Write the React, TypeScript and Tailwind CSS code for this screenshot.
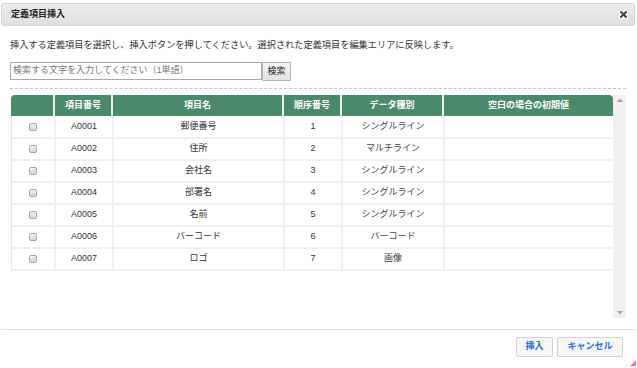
import React from "react";

const rows = [
  ["A0001", "郵便番号", "1", "シングルライン"],
  ["A0002", "住所", "2", "マルチライン"],
  ["A0003", "会社名", "3", "シングルライン"],
  ["A0004", "部署名", "4", "シングルライン"],
  ["A0005", "名前", "5", "シングルライン"],
  ["A0006", "バーコード", "6", "バーコード"],
  ["A0007", "ロゴ", "7", "画像"],
];

const cols = "grid grid-cols-[42px_58px_171px_58px_102px_171px]";

export default function App() {
  return (
    <div
      className="relative w-[637px] h-[368px] bg-white overflow-hidden flex flex-col pt-[3px] text-[#333]"
      style={{ fontFamily: '"Liberation Sans", "Noto Sans CJK JP", sans-serif' }}
    >
      {/* Title bar */}
      <div className="ml-[1px] mr-[2px] h-[23px] rounded-[3px] border border-[#d6d6d6] bg-gradient-to-b from-[#ededed] to-[#e0e0e0] flex items-center pl-[9px] pr-[5px]">
        <span className="text-[9px] font-bold text-[#222] leading-none">定義項目挿入</span>
        <div className="ml-auto w-[11px] h-[11px] bg-white border border-[#e2e2e2] rounded-[1px] flex items-center justify-center">
          <svg width="7" height="7" viewBox="0 0 7 7">
            <path d="M1 1L6 6M6 1L1 6" stroke="#444" strokeWidth="2" strokeLinecap="square" />
          </svg>
        </div>
      </div>

      {/* Body */}
      <div className="px-[10px] flex flex-col">
        <div className="mt-[13px] h-[12px] text-[9.2px] leading-[12px] text-[#333] whitespace-nowrap">
          挿入する定義項目を選択し、挿入ボタンを押してください。選択された定義項目を編集エリアに反映します。
        </div>

        <div className="mt-[11px] flex items-start">
          <div className="w-[252px] h-[18px] border border-[#a9a9a9] bg-white flex items-center pl-[2px] text-[9px] text-[#757575] whitespace-nowrap">
            検索する文字を入力してください（1単語）
          </div>
          <div className="w-[29px] h-[19px] border border-[#b5b5b5] rounded-[1px] bg-gradient-to-b from-[#f7f7f7] to-[#e3e3e3] flex items-center justify-center text-[9px] text-[#222]">
            検索
          </div>
        </div>

        <div className="mt-[7px] w-[616px] border-t border-dashed border-[#c4c4c4]" />

        {/* Table area */}
        <div className="mt-[6px] ml-[1px] flex h-[223px]">
          <div className="w-[602px] flex flex-col">
            <div className={`${cols} h-[22px] border-b border-white`}>
              {["", "項目番号", "項目名", "順序番号", "データ種別", "空白の場合の初期値"].map((h, i) => (
                <div
                  key={i}
                  className={`bg-[#4a8a6b] text-white text-[9px] font-bold flex items-center justify-center ${i > 0 ? "border-l-2 border-[#e9f1ed]" : ""} ${i === 0 ? "rounded-tl-[4px]" : ""} ${i === 5 ? "rounded-tr-[4px]" : ""}`}
                >
                  {h}
                </div>
              ))}
            </div>
            <div className="border-l border-[#e6e6e6]">
              {rows.map((r, idx) => (
                <div key={idx} className={`${cols} h-[22px] border-b-2 border-[#efefef]`}>
                  <div className="flex items-center justify-center">
                    <div className="w-[8px] h-[8px] rounded-[2px] border border-[#a8a8a8] bg-gradient-to-b from-[#f2f2f2] to-[#d4d4d4]" />
                  </div>
                  <div className="border-l-2 border-[#efefef] flex items-center justify-center text-[9px] text-[#333]">{r[0]}</div>
                  <div className="border-l-2 border-[#efefef] flex items-center justify-center text-[9px] text-[#333]">{r[1]}</div>
                  <div className="border-l-2 border-[#efefef] flex items-center justify-center text-[9px] text-[#333]">{r[2]}</div>
                  <div className="border-l-2 border-[#efefef] flex items-center justify-center text-[9px] text-[#444]">{r[3]}</div>
                  <div className="border-l-2 border-[#efefef]" />
                </div>
              ))}
            </div>
          </div>
          {/* Scrollbar */}
          <div className="w-[13px] bg-[#f0f0f0] flex flex-col items-center justify-between py-[3px]">
            <svg width="6" height="4" viewBox="0 0 6 4">
              <path d="M0 4L3 0.5L6 4Z" fill="#a3a3a3" />
            </svg>
            <svg width="6" height="4" viewBox="0 0 6 4">
              <path d="M0 0L3 3.5L6 0Z" fill="#a3a3a3" />
            </svg>
          </div>
        </div>
      </div>

      {/* Footer */}
      <div className="mt-[11px] ml-[1px] mr-[2px] border-t border-[#dedede]" />
      <div className="mt-[7px] flex justify-end gap-[4px] pr-[14px]">
        <div className="w-[37px] h-[20px] border border-[#d3d3d3] rounded-[2px] bg-[#f6f6f6] flex items-center justify-center text-[9px] font-bold text-[#2a6fd1]">
          挿入
        </div>
        <div className="w-[66px] h-[20px] border border-[#d3d3d3] rounded-[2px] bg-[#f6f6f6] flex items-center justify-center text-[9px] font-bold text-[#2a6fd1]">
          キャンセル
        </div>
      </div>

      {/* Resize grip */}
      <svg className="absolute right-[1px] bottom-[2px]" width="6" height="6" viewBox="0 0 6 6">
        <path d="M6 0L6 6L0 6Z" fill="#f06fbf" />
      </svg>
    </div>
  );
}
